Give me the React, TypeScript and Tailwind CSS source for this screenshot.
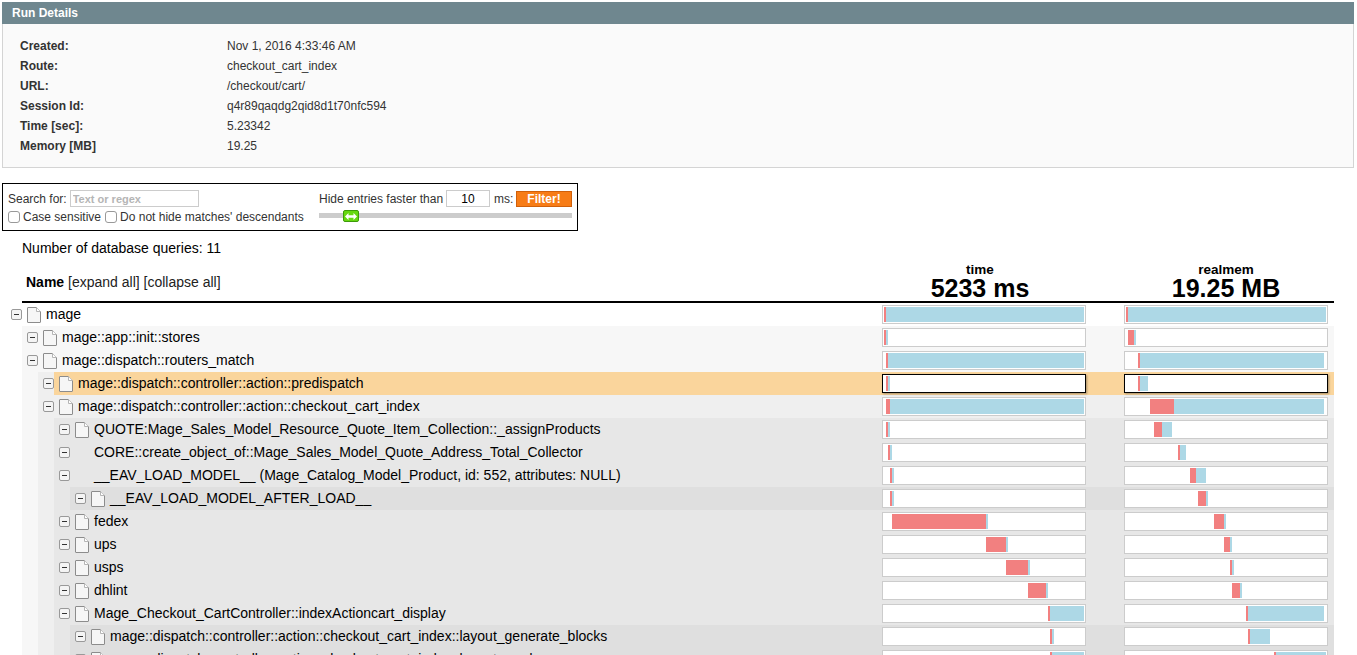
import React from "react";

type Span = [number, number, number];

type Entry = {
  name: string;
  time: Span;
  mem: Span;
  noIcon?: boolean;
  active?: boolean;
  children?: Entry[];
};

const details = [
  ["Created:", "Nov 1, 2016 4:33:46 AM"],
  ["Route:", "checkout_cart_index"],
  ["URL:", "/checkout/cart/"],
  ["Session Id:", "q4r89qaqdg2qid8d1t70nfc594"],
  ["Time [sec]:", "5.23342"],
  ["Memory [MB]", "19.25"],
];

// [offset, own, children] in px inside the 200px bar
const tree: Entry = {
  name: "mage",
  time: [0, 2, 198],
  mem: [0, 2, 198],
  children: [
    { name: "mage::app::init::stores", time: [0, 2, 2], mem: [2, 6, 2] },
    {
      name: "mage::dispatch::routers_match",
      time: [2, 2, 196],
      mem: [12, 2, 184],
      children: [
        {
          name: "mage::dispatch::controller::action::predispatch",
          time: [2, 2, 2],
          mem: [12, 2, 8],
          active: true,
        },
        {
          name: "mage::dispatch::controller::action::checkout_cart_index",
          time: [2, 4, 194],
          mem: [24, 24, 150],
          children: [
            {
              name: "QUOTE:Mage_Sales_Model_Resource_Quote_Item_Collection::_assignProducts",
              time: [2, 2, 2],
              mem: [28, 8, 10],
            },
            {
              name: "CORE::create_object_of::Mage_Sales_Model_Quote_Address_Total_Collector",
              time: [4, 2, 2],
              mem: [52, 2, 6],
              noIcon: true,
            },
            {
              name: "__EAV_LOAD_MODEL__ (Mage_Catalog_Model_Product, id: 552, attributes: NULL)",
              time: [6, 2, 2],
              mem: [64, 6, 10],
              noIcon: true,
              children: [
                { name: "__EAV_LOAD_MODEL_AFTER_LOAD__", time: [6, 2, 2], mem: [72, 8, 2] },
              ],
            },
            { name: "fedex", time: [8, 94, 2], mem: [88, 10, 2] },
            { name: "ups", time: [102, 20, 2], mem: [98, 6, 2] },
            { name: "usps", time: [122, 22, 2], mem: [104, 2, 2] },
            { name: "dhlint", time: [144, 18, 2], mem: [106, 8, 2] },
            {
              name: "Mage_Checkout_CartController::indexActioncart_display",
              time: [164, 2, 34],
              mem: [120, 2, 76],
              children: [
                {
                  name: "mage::dispatch::controller::action::checkout_cart_index::layout_generate_blocks",
                  time: [166, 2, 2],
                  mem: [122, 2, 20],
                },
                {
                  name: "mage::dispatch::controller::action::checkout_cart_index::layout_render",
                  time: [166, 2, 32],
                  mem: [148, 2, 50],
                },
              ],
            },
          ],
        },
      ],
    },
  ],
};

const Toggle = () => (
  <span className="flex h-[11px] w-[11px] items-center justify-center rounded-[2px] border border-[#999] bg-[#f4f4f4]">
    <span className="h-px w-[5px] bg-[#333]" />
  </span>
);

const FileIcon = () => (
  <svg width="14" height="16" viewBox="0 0 14 16" className="shrink-0">
    <path d="M1 .5H9.5L13.5 4.5V15a.5.5 0 0 1-.5.5H1a.5.5 0 0 1-.5-.5V1A.5.5 0 0 1 1 .5Z" fill="#f6f6f6" stroke="#8c8c8c" />
    <path d="M9.5 .5V4.5H13.5" fill="#fff" stroke="#b5b5b5" />
  </svg>
);

const Bar = ({ span, active }: { span: Span; active?: boolean }) => (
  <div
    className={`flex h-[19px] w-[204px] shrink-0 border bg-white p-px ${
      active ? "border-black shadow-[1px_1px_2px_rgba(0,0,0,0.35)]" : "border-[#ccc]"
    }`}
  >
    <div style={{ width: span[0] }} />
    <div className="bg-[#f28080]" style={{ width: span[1] }} />
    <div className="bg-[#add8e6]" style={{ width: span[2] }} />
  </div>
);

const Node = ({ entry }: { entry: Entry }) => (
  <div>
    <div className="flex h-[23px]">
      <div className="flex w-4 shrink-0 items-center justify-end">
        <Toggle />
      </div>
      <div className={`flex min-w-0 flex-1 items-center pr-1.5 pl-[5px] ${entry.active ? "bg-[#fad59c]" : ""}`}>
        <div className="w-[19px] shrink-0">{!entry.noIcon && <FileIcon />}</div>
        <div className="min-w-0 flex-1 text-[14px] whitespace-nowrap text-black">{entry.name}</div>
        <div className="flex gap-[38px]">
          <Bar span={entry.time} active={entry.active} />
          <Bar span={entry.mem} active={entry.active} />
        </div>
      </div>
    </div>
    {entry.children && (
      <div className="ml-4 bg-black/[0.03]">
        {entry.children.map((child) => (
          <Node key={child.name} entry={child} />
        ))}
      </div>
    )}
  </div>
);

const Check = () => (
  <input type="checkbox" className="h-3 w-3 shrink-0 appearance-none rounded-[3px] border border-[#999] bg-white" />
);

export default function App() {
  return (
    <div className="h-[655px] overflow-hidden bg-white pt-0.5 font-['Liberation_Sans',Arial,sans-serif] text-[12px] text-[#333]">
      <div className="mr-[3px] ml-0.5">
        <div className="flex h-[22px] items-center bg-[#6f878f] pl-2.5 text-[12px] font-bold text-white">Run Details</div>
        <div className="h-[144px] border border-t-0 border-[#d4d4d4] bg-[#fafafa] pt-3 pl-[17px]">
          {details.map(([label, value]) => (
            <div key={label} className="flex h-5 items-center">
              <div className="w-[207px] font-bold">{label}</div>
              <div>{value}</div>
            </div>
          ))}
        </div>
      </div>

      <div className="mt-[15px] ml-0.5 flex h-[48px] w-[576px] border border-black pt-1.5 pl-[5px]">
        <div className="w-[311px] shrink-0">
          <div className="flex h-[17px] items-center gap-[3px]">
            <span>Search for:</span>
            <input
              placeholder="Text or regex"
              className="h-[17px] w-[129px] border border-[#ccc] bg-white px-0.5 text-[11px] font-bold outline-none placeholder:text-[#b5b5b5]"
            />
          </div>
          <div className="mt-[2px] flex h-4 items-center">
            <Check />
            <span className="ml-[3px]">Case sensitive</span>
            <span className="ml-[4px]" />
            <Check />
            <span className="ml-[3px]">Do not hide matches' descendants</span>
          </div>
        </div>
        <div className="w-[253px] shrink-0">
          <div className="flex h-[17px] items-center whitespace-nowrap">
            <span className="w-[124px] shrink-0">Hide entries faster than</span>
            <input
              defaultValue="10"
              className="ml-[3px] h-[17px] w-11 shrink-0 border border-[#ccc] bg-white text-center text-[12px] text-black outline-none"
            />
            <span className="ml-1 w-[18px] shrink-0">ms:</span>
            <button className="ml-1 h-[16px] w-14 shrink-0 border border-[#d0600a] bg-[#f77c16] text-[12px] leading-none font-bold text-white">
              Filter!
            </button>
          </div>
          <div className="relative mt-[6px] h-[5px] bg-[#ccc]">
            <div className="absolute -top-[3px] left-6 flex h-[12px] w-[16px] items-center justify-center rounded-[2px] border border-[#3d9a0a] bg-[#66d80f]">
              <svg width="12" height="7" viewBox="0 0 12 7">
                <path d="M0 3.5 3.5 0V2.2H8.5V0L12 3.5 8.5 7V4.8H3.5V7Z" fill="#fff" />
              </svg>
            </div>
          </div>
        </div>
      </div>

      <div className="mt-[9px] ml-[22px] h-4 text-[14px] leading-4 text-black">Number of database queries: 11</div>

      <div className="mt-[7px] mr-[23px] ml-[22px] flex h-[40px] items-end border-b-2 border-black pr-1.5">
        <div className="min-w-0 flex-1 self-center pl-1 text-[14px] text-[#222]">
          <b className="text-black">Name</b> [expand all] [collapse all]
        </div>
        <div className="flex gap-[38px] text-center font-bold text-black">
          <div className="w-[204px] pr-2">
            <div className="text-[13.5px] leading-3">time</div>
            <div className="text-[25px] leading-[25px]">5233 ms</div>
          </div>
          <div className="w-[204px]">
            <div className="text-[13.5px] leading-3">realmem</div>
            <div className="text-[25px] leading-[25px]">19.25 MB</div>
          </div>
        </div>
      </div>

      <div className="mr-[23px] ml-1.5">
        <Node entry={tree} />
      </div>
    </div>
  );
}
